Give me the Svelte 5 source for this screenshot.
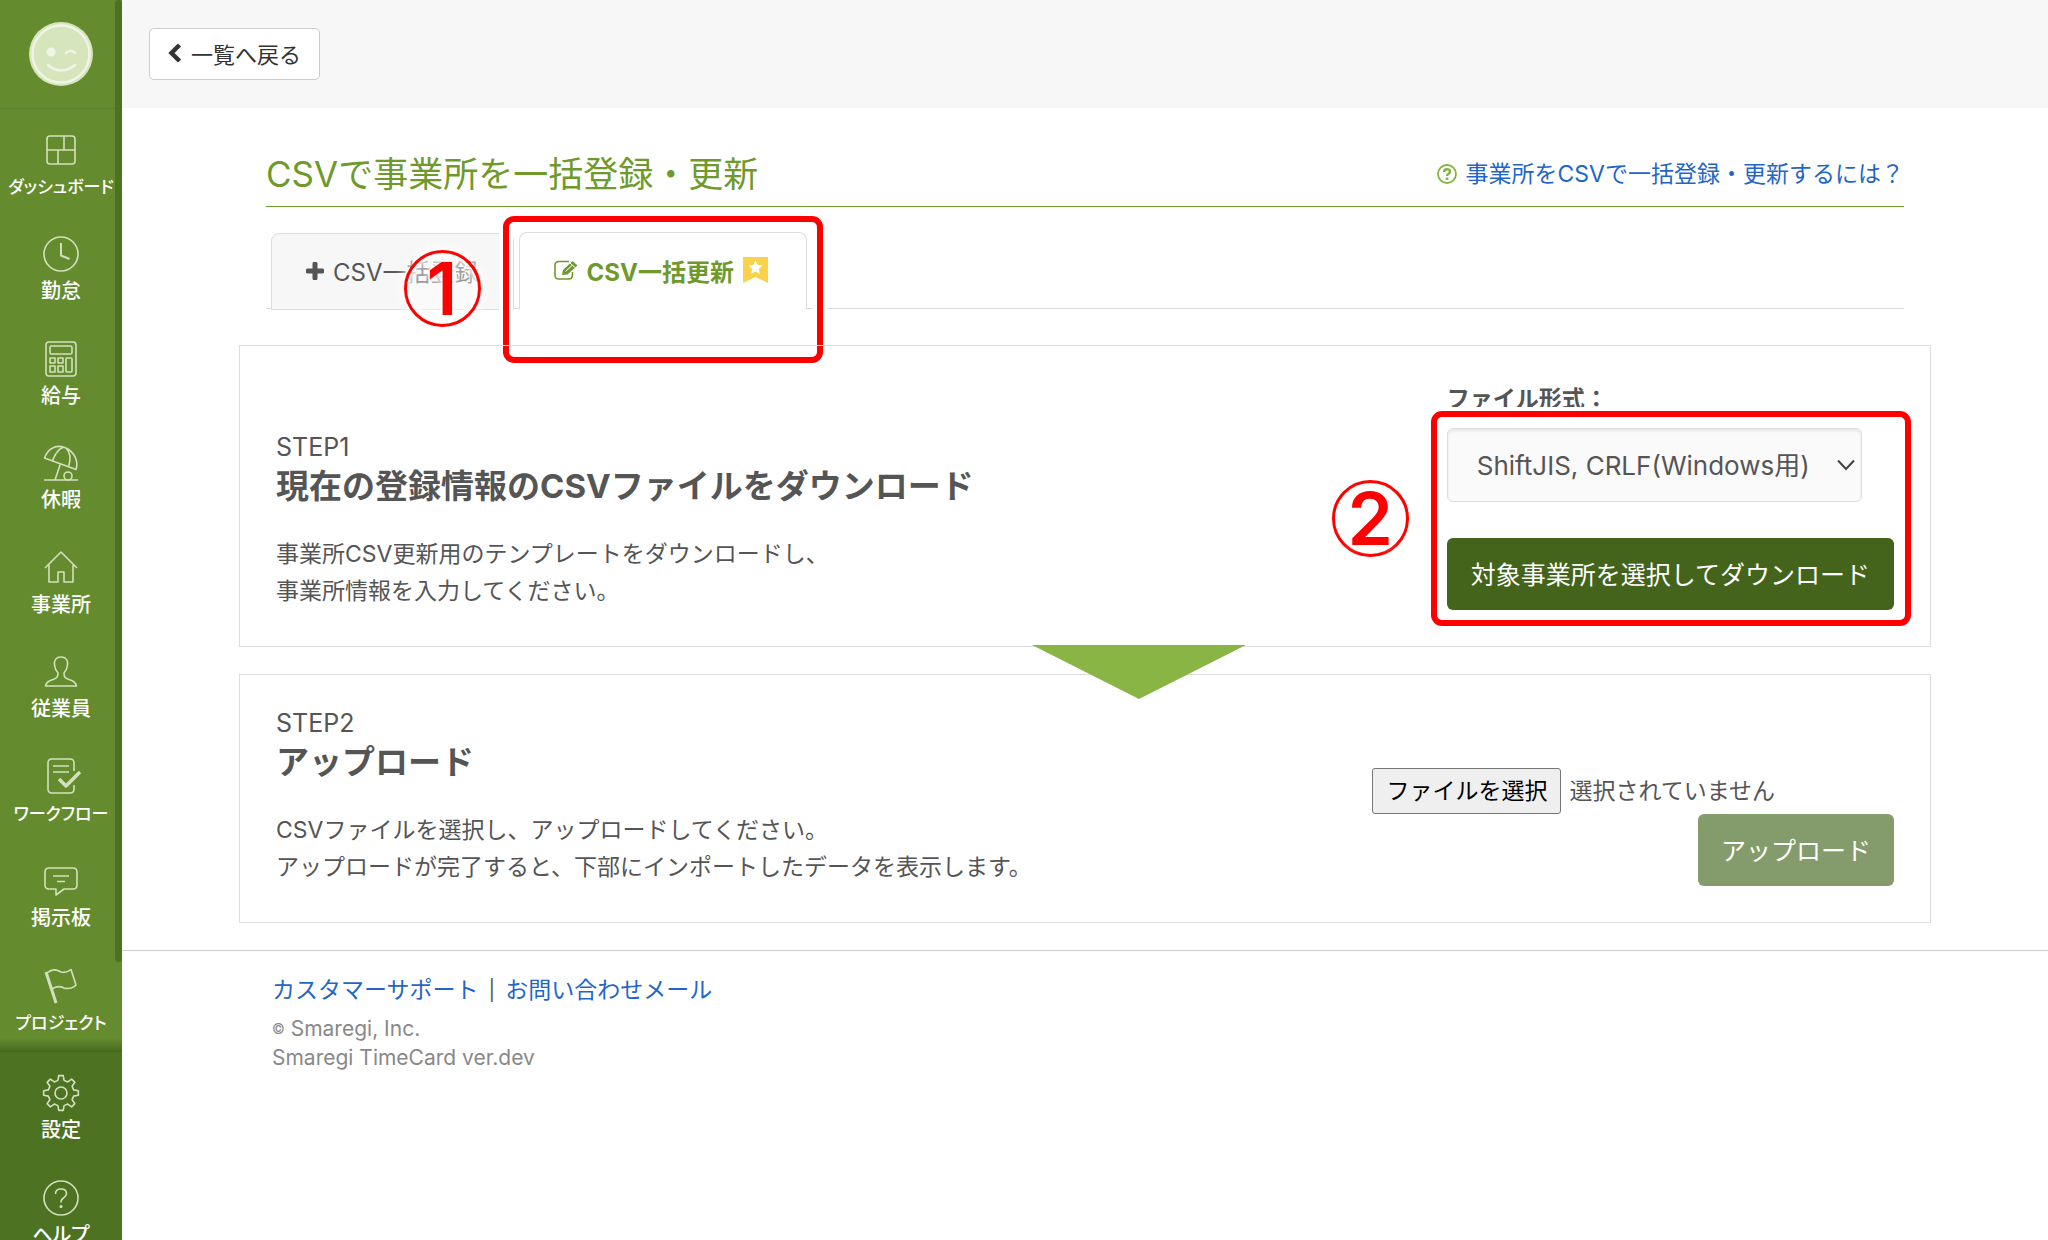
<script>
  const mainItems = [
    { icon: 'dashboard', label: 'ダッシュボード', kana: true },
    { icon: 'clock', label: '勤怠' },
    { icon: 'calc', label: '給与' },
    { icon: 'parasol', label: '休暇' },
    { icon: 'house', label: '事業所' },
    { icon: 'person', label: '従業員' },
    { icon: 'workflow', label: 'ワークフロー', kana: true },
    { icon: 'board', label: '掲示板' },
    { icon: 'flag', label: 'プロジェクト', kana: true }
  ];
  const subItems = [
    { icon: 'gear', label: '設定' },
    { icon: 'help', label: 'ヘルプ' }
  ];

  // Outline of an eight-toothed cog centred on 18,18.
  function cog() {
    const pts = [];
    for (let i = 0; i < 8; i++) {
      const a = (i * Math.PI) / 4 - Math.PI / 2;
      for (const [r, d] of [[13, -0.24], [17.5, -0.13], [17.5, 0.13], [13, 0.24]]) {
        pts.push(`${(18 + r * Math.cos(a + d)).toFixed(2)} ${(18 + r * Math.sin(a + d)).toFixed(2)}`);
      }
    }
    return `M${pts.join('L')}Z`;
  }
  const cogPath = cog();
  let format = $state('sjis');
</script>

{#snippet navItem(item)}
  <li>
    <a class="nav-link" class:kana={item.kana} href="#{item.icon}">
      <svg class="nav-icon" viewBox="0 0 36 36" aria-hidden="true">
        {#if item.icon === 'dashboard'}
          <rect x="4" y="4" width="28" height="28" rx="3" />
          <path d="M4 18H32M21 4V18M15 18V32" />
        {:else if item.icon === 'clock'}
          <circle cx="18" cy="18" r="17" />
          <path d="M18 7V19.500L26.500 23" stroke-width="2" />
        {:else if item.icon === 'calc'}
          <rect x="3" y="1" width="30" height="34" rx="3" />
          <rect x="7" y="5" width="22" height="8" rx="1.500" />
          <rect x="7" y="17" width="5" height="5" /><rect x="15" y="17" width="5" height="5" />
          <rect x="7" y="25" width="5" height="6" /><rect x="15" y="25" width="5" height="6" />
          <rect x="23" y="17" width="6" height="14" rx="1" />
        {:else if item.icon === 'parasol'}
          <path d="M1.500 13C5 3 14 -1 23 3C31 7 36 16 33 24.500ZM9.500 15.500C12 9 16 4 20 2.200M25.500 22C28 14 27 7 23 3M17.500 18.500L12 35M1 35H35" />
          <circle cx="25" cy="31" r="4" />
        {:else if item.icon === 'house'}
          <path d="M2 18L18 2L34 18M6 15V32H15V22H21V32H30V15" />
        {:else if item.icon === 'person'}
          <path d="M18 3C13 3 11 6 11.500 11C12 15 13 17 15 19C15 23 14 24 10 25.500C5 27 3 29 2.500 32H33.500C33 29 31 27 26 25.500C22 24 21 23 21 19C23 17 24 15 24.500 11C25 6 23 3 18 3Z" />
        {:else if item.icon === 'workflow'}
          <path d="M31 12V4Q31 0 27 0H9Q5 0 5 4V30Q5 34 9 34H27Q31 34 31 30V26M10 7H26M10 13H26" />
          <path d="M16 20L23 27L37 13" stroke-width="3.500" />
        {:else if item.icon === 'board'}
          <path d="M6 5H30Q34 5 34 9V22Q34 26 30 26H21L13 32V26H6Q2 26 2 22V9Q2 5 6 5ZM10 13H26M14 18.500H22" />
        {:else if item.icon === 'flag'}
          <path d="M3 4L13 35" stroke-width="3" />
          <path d="M4 5C10 0 14 2 18 4C22 5 25 4 28 1.500L33 17C29 21 25 21 21 20C17 18 13 18 9 21" />
        {:else if item.icon === 'gear'}
          <path d={cogPath} /><circle cx="18" cy="18" r="6" />
        {:else}
          <circle cx="18" cy="18" r="17" />
          <path d="M12.500 14Q12.500 9 18 9Q23.500 9 23.500 13.500Q23.500 16 20.500 18Q18 19.500 18 22.500" />
          <circle cx="18" cy="26.500" r="0.800" />
        {/if}
      </svg>
      <span>{item.label}</span>
    </a>
  </li>
{/snippet}

<div class="app">
  <aside class="sidebar">
    <div class="profile">
      <svg class="avatar" viewBox="0 0 64 64" role="img" aria-label="プロフィール">
        <circle cx="32" cy="32" r="32" fill="#d7e5bc" />
        <circle cx="32" cy="32" r="28.500" fill="none" stroke="#f0f4e8" stroke-width="2.400" />
        <circle cx="22" cy="30" r="4.500" fill="#f0f4e8" />
        <path d="M37 31Q42 26.500 46 31M19 43Q32 54 46 43" fill="none" stroke="#f0f4e8" stroke-width="2.400" stroke-linecap="round" />
      </svg>
    </div>
    <nav class="nav-main" aria-label="メイン">
      <ul>{#each mainItems as item}{@render navItem(item)}{/each}</ul>
    </nav>
    <nav class="nav-sub" aria-label="サブ">
      <ul>{#each subItems as item}{@render navItem(item)}{/each}</ul>
    </nav>
    <div class="scroll-thumb"></div>
  </aside>

  <div class="page">
    <header class="topbar">
      <button class="back" type="button">
        <svg width="14" height="20" viewBox="0 0 14 20" aria-hidden="true"><path d="M11.500 2L3.500 10L11.500 18" fill="none" stroke="#333" stroke-width="4.500" /></svg>
        一覧へ戻る
      </button>
    </header>

    <main>
      <div class="title-row">
        <h1>CSVで事業所を一括登録・更新</h1>
        <a class="help" href="#help-csv">
          <svg width="20" height="20" viewBox="0 0 20 20" fill="none" stroke="#82b440" aria-hidden="true">
            <circle cx="10" cy="10" r="9" stroke-width="1.800" />
            <path d="M7 8Q7.200 5.200 10 5.200Q13 5.200 13 7.800Q13 9.200 11.300 10Q10 10.700 10 12" stroke-width="2.400" />
            <path d="M10 13.500V16" stroke-width="2.600" />
          </svg>
          事業所をCSVで一括登録・更新するには？
        </a>
      </div>

      <div class="tabs" role="tablist">
        <div class="tab-slot">
          <button class="tab" type="button" role="tab" aria-selected="false">
            <svg width="18" height="18" viewBox="0 0 18 18" aria-hidden="true"><path d="M9 2V16M2 9H16" stroke="#555" stroke-width="5" stroke-linecap="round" /></svg>
            CSV一括登録
          </button>
          <span class="marker marker-one">1</span>
        </div>
        <div class="tab-slot">
          <button class="tab active" type="button" role="tab" aria-selected="true">
            <svg width="24" height="20" viewBox="0 0 24 20" fill="none" stroke="#6f9a2b" aria-hidden="true">
              <path d="M15 1.500H5Q1 1.500 1 5.500V15Q1 19 5 19H14.500Q18.500 19 18.500 15V12" stroke-width="1.600" />
              <path d="M8 15L9 10L18.500 1L23.500 5.500L13.500 14.500Z" fill="#6f9a2b" stroke="none" />
              <path d="M11.500 11.500L18 5.500M16 3L21 7.500" stroke="#fff" stroke-width="1" />
            </svg>
            CSV一括更新
            <svg width="25" height="26" viewBox="0 0 25 26" aria-hidden="true">
              <path d="M0 0H25V26L12.500 20L0 26Z" fill="#fad24b" />
              <path d="M12.500 3.500L14.600 8L19.500 8.600L15.900 12L16.800 16.800L12.500 14.400L8.200 16.800L9.100 12L5.500 8.600L10.400 8Z" fill="#fff" />
            </svg>
          </button>
          <span class="frame frame-tab"></span>
        </div>
      </div>

      <section class="panel panel-download">
        <div class="text">
          <p class="step">STEP1</p>
          <h2>現在の登録情報のCSVファイルをダウンロード</h2>
          <p class="desc">事業所CSV更新用のテンプレートをダウンロードし、<br />事業所情報を入力してください。</p>
        </div>
        <div class="download">
          <label for="format">ファイル形式：</label>
          <div class="controls">
            <div class="select-wrap">
              <select id="format" bind:value={format}>
                <option value="sjis">ShiftJIS, CRLF(Windows用)</option>
                <option value="utf8">UTF-8, LF(Mac用)</option>
              </select>
              <svg class="chevron" width="18" height="12" viewBox="0 0 18 12" aria-hidden="true"><path d="M1 1.500L9 10L17 1.500" fill="none" stroke="#444" stroke-width="2" /></svg>
            </div>
            <button class="primary" type="button">対象事業所を選択してダウンロード</button>
            <span class="frame frame-download"></span>
            <span class="marker marker-two">2</span>
          </div>
        </div>
        <span class="arrow"></span>
      </section>

      <section class="panel">
        <div class="text">
          <p class="step">STEP2</p>
          <h2>アップロード</h2>
          <p class="desc">CSVファイルを選択し、アップロードしてください。<br />アップロードが完了すると、下部にインポートしたデータを表示します。</p>
        </div>
        <div class="upload">
          <div class="file">
            <label class="file-button">ファイルを選択<input type="file" accept=".csv" /></label>
            <span>選択されていません</span>
          </div>
          <button class="primary" type="button" disabled>アップロード</button>
        </div>
      </section>
    </main>

    <footer>
      <p class="links"><a href="#support">カスタマーサポート</a><span class="bar">|</span><a href="#contact">お問い合わせメール</a></p>
      <p class="legal"><small>©</small> Smaregi, Inc.</p>
      <p class="legal">Smaregi TimeCard ver.dev</p>
    </footer>
  </div>
</div>

<style>
  :global(body) {
    margin: 0;
    background: #fff;
  }
  .app {
    display: flex;
    height: 100vh;
    overflow: hidden;
    color: #555;
    font-family: Inter, "Noto Sans CJK JP", sans-serif;
    font-size: 23px;
    line-height: 34px;
  }
  .app * {
    box-sizing: border-box;
  }
  h1, h2, p, ul {
    margin: 0;
    padding: 0;
  }
  a {
    color: #1f66c8;
    text-decoration: none;
  }
  button, select {
    font-family: inherit;
    cursor: pointer;
  }
  svg {
    flex: none;
  }

  .sidebar {
    position: relative;
    display: flex;
    flex: none;
    flex-direction: column;
    width: 122px;
    background: #648c2e;
  }
  .profile {
    display: flex;
    justify-content: center;
    padding: 22px 0;
    border-bottom: 1px solid #5a8029;
  }
  .avatar {
    width: 64px;
    height: 64px;
  }
  .nav-main {
    flex: 1;
    padding-bottom: 3px;
    background: linear-gradient(to top, #46691f, #648c2e 14px);
  }
  .nav-main ul {
    display: grid;
    grid-auto-rows: 1fr;
    height: 100%;
  }
  ul {
    list-style: none;
  }
  .nav-sub {
    flex: none;
    height: 188px;
    overflow: hidden;
    background: #4d7222;
  }
  .nav-sub li {
    height: 105px;
  }
  .nav-link {
    display: flex;
    flex-direction: column;
    align-items: center;
    gap: 7px;
    padding-top: 23px;
    color: #fff;
    font-size: 20px;
    font-weight: 500;
    font-feature-settings: "palt";
    line-height: 24px;
    white-space: nowrap;
  }
  .nav-link.kana {
    font-size: 17px;
  }
  .nav-icon {
    width: 36px;
    height: 36px;
    overflow: visible;
    fill: none;
    stroke: #d3e0bd;
    stroke-width: 1.6;
    stroke-linejoin: round;
  }
  .scroll-thumb {
    position: absolute;
    top: 0;
    right: 0;
    width: 7px;
    height: 962px;
    border-radius: 4px;
    background: #4d7222;
  }

  .page {
    flex: 1;
    min-width: 0;
  }
  .topbar {
    padding: 28px 27px;
    background: #f7f7f7;
  }
  .back {
    display: flex;
    align-items: center;
    gap: 9px;
    height: 52px;
    padding: 0 18px 3px;
    border: 1px solid #ccc;
    border-radius: 5px;
    background: #fff;
    color: #333;
    font-size: 22px;
  }
  main {
    padding: 0 117px;
  }
  .title-row {
    display: flex;
    align-items: center;
    justify-content: space-between;
    margin: 0 27px;
    padding: 42px 0 8px;
    border-bottom: 1px solid #6f9a2b;
  }
  h1 {
    color: #6f9a2b;
    font-size: 35px;
    font-weight: 400;
    line-height: 48px;
  }
  .help {
    display: flex;
    align-items: center;
    gap: 9px;
  }

  .tabs {
    display: flex;
    align-items: flex-end;
    gap: 5px;
    margin: 25px 27px 36px;
    padding-left: 5px;
    border-bottom: 1px solid #ddd;
  }
  .tab-slot {
    position: relative;
    margin-bottom: -2px;
  }
  .tab {
    display: flex;
    align-items: center;
    gap: 9px;
    height: 77px;
    padding: 0 34px 2px;
    border: 1px solid #ddd;
    border-radius: 8px 8px 0 0;
    background: #f7f7f7;
    color: #555;
    font-size: 24px;
  }
  .tab.active {
    height: 78px;
    padding-right: 38px;
    border-bottom-color: #fff;
    background: #fff;
    color: #6f9a2b;
    font-weight: 700;
  }

  .frame {
    position: absolute;
    border: 6px solid #f00;
    border-radius: 11px;
    box-shadow: 0 0 0 4px #fff, inset 0 0 0 4px #fff;
    pointer-events: none;
  }
  .frame-tab {
    inset: -16px -16px -53px;
  }
  .frame-download {
    inset: -17px -17px -16px -16px;
  }
  .marker {
    position: absolute;
    z-index: 1;
    width: 77px;
    height: 77px;
    border: 3px solid #f00;
    border-radius: 50%;
    background: rgba(255, 255, 255, 0.4);
    box-shadow: 0 0 10px 4px rgba(255, 255, 255, 0.8), inset 0 0 6px 3px #fff;
    color: #f00;
    font-size: 73px;
    font-weight: 600;
    line-height: 71px;
    text-align: center;
    text-shadow: 0 0 6px #fff, 0 0 10px #fff;
    pointer-events: none;
  }
  .marker-one {
    top: 17px;
    right: 33px;
  }
  .marker-two {
    top: 52px;
    left: -115px;
  }

  .panel {
    position: relative;
    display: flex;
    align-items: flex-end;
    justify-content: space-between;
    margin-bottom: 27px;
    padding: 31px 36px 36px;
    border: 1px solid #ddd;
  }
  .panel-download {
    padding-top: 36px;
  }
  .step {
    font-size: 25px;
  }
  h2 {
    margin-bottom: 28px;
    font-size: 33px;
    font-weight: 700;
    line-height: 44px;
  }
  .desc {
    line-height: 37px;
  }
  .download label {
    display: block;
    margin-bottom: 12px;
    font-weight: 700;
  }
  .controls {
    position: relative;
    display: flex;
    flex-direction: column;
    gap: 36px;
  }
  .select-wrap {
    position: relative;
    margin-right: 32px;
  }
  select {
    display: block;
    width: 100%;
    height: 74px;
    padding: 0 48px 0 29px;
    border: 1px solid #ddd;
    border-radius: 6px;
    background: #fafafa;
    box-shadow: inset 0 2px 3px rgba(0, 0, 0, 0.08);
    color: #555;
    font-size: 26px;
    appearance: none;
  }
  .chevron {
    position: absolute;
    top: 31px;
    right: 7px;
    pointer-events: none;
  }
  .primary {
    height: 72px;
    padding: 0 23px 3px;
    border: 0;
    border-radius: 6px;
    background: #43641a;
    color: #fff;
    font-size: 25px;
  }
  .controls .primary {
    padding: 0 24px 3px;
  }
  .primary:disabled {
    background: #849c6b;
  }
  .arrow {
    position: absolute;
    bottom: -53px;
    left: 50%;
    z-index: 1;
    width: 214px;
    height: 54px;
    margin-left: -53px;
    background: #88b544;
    clip-path: polygon(0 0, 100% 0, 50% 100%);
  }
  .upload {
    display: flex;
    flex-direction: column;
    align-items: flex-end;
  }
  .file {
    display: flex;
    align-items: center;
    gap: 8px;
    margin-right: 119px;
  }
  .file-button {
    position: relative;
    padding: 5px 13px;
    border: 1px solid #767676;
    border-radius: 3px;
    background: #efefef;
    color: #000;
    cursor: pointer;
  }
  .file-button input {
    position: absolute;
    inset: 0;
    width: 100%;
    opacity: 0;
  }

  footer {
    padding: 22px 150px;
    border-top: 1px solid #ccc;
  }
  .links {
    display: flex;
    gap: 10px;
    margin-bottom: 7px;
  }
  .bar {
    font-size: 20px;
  }
  .legal {
    color: #888;
    font-size: 21px;
    line-height: 29px;
  }
  small {
    font-size: 14px;
    vertical-align: 2px;
  }
</style>
